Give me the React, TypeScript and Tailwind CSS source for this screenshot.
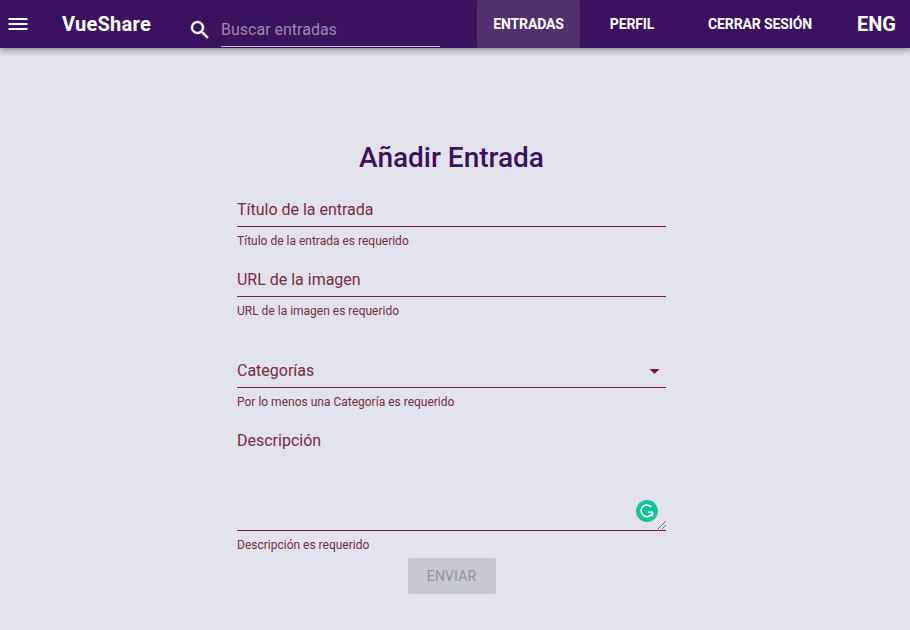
import React from "react";

const errorText = "text-[#7a2c40]";

function Field({ label, message }: { label: string; message: string }) {
  return (
    <div className={`h-[70px] ${errorText}`}>
      <div className="flex h-[34px] items-center border-b border-[#7a1f32] text-base leading-5 tracking-[-0.01px]">{label}</div>
      <div className="mt-2 text-xs leading-3">{message}</div>
    </div>
  );
}

export default function App() {
  return (
    <div className="h-[630px] w-[910px] overflow-hidden bg-[#e2e2ed] font-['Roboto',sans-serif]">
      <header className="relative flex h-12 bg-[#3b125f] text-white shadow-[0_2px_4px_-1px_rgba(0,0,0,0.2),0_4px_5px_rgba(0,0,0,0.14),0_1px_10px_rgba(0,0,0,0.12)]">
        <div className="flex w-[62px] items-center pl-2">
          <svg className="h-3 w-5" viewBox="0 0 20 12" fill="currentColor"><path d="M.5 0h19v2H.5zM.5 5h19v2H.5zM.5 10h19v2H.5z" /></svg>
        </div>
        <div className="flex w-[126px] items-center text-xl font-bold tracking-[0.25px]">VueShare</div>
        <div className="flex w-[289px] items-start">
          <svg className="mt-[18px] size-6" viewBox="0 0 24 24" fill="currentColor" stroke="currentColor" strokeWidth="0.4"><path d="M9.5 3A6.5 6.5 0 0 1 16 9.5c0 1.61-.59 3.09-1.56 4.23l.27.27h.79l5 5-1.5 1.5-5-5v-.79l-.27-.27A6.516 6.516 0 0 1 9.5 16 6.5 6.5 0 0 1 3 9.5 6.5 6.5 0 0 1 9.5 3m0 2C7 5 5 7 5 9.5S7 14 9.5 14 14 12 14 9.5 12 5 9.5 5Z" /></svg>
          <div className="ml-[9px] mt-3 flex h-[35px] w-[219px] items-center border-b border-[#c4b8cf] pt-0.5 text-base text-[#9d88af]">Buscar entradas</div>
        </div>
        <nav className="flex text-sm font-bold tracking-[-0.12px]">
          <div className="flex w-[103px] items-center justify-center rounded-[2px] bg-[#533071]">ENTRADAS</div>
          <div className="flex w-[104px] items-center justify-center">PERFIL</div>
          <div className="flex w-[152px] items-center justify-center">CERRAR SESIÓN</div>
        </nav>
        <div className="ml-[21px] flex items-center text-xl font-bold">ENG</div>
      </header>
      <main className="ml-[237px] w-[429px] pt-[92px]">
        <h1 className="h-[53px] text-center text-[28px] leading-9 font-medium text-[#3b125f]">Añadir Entrada</h1>
        <Field label="Título de la entrada" message="Título de la entrada es requerido" />
        <Field label="URL de la imagen" message="URL de la imagen es requerido" />
        <div className={`mt-[21px] h-[70px] ${errorText}`}>
          <div className="flex h-[34px] items-center justify-between border-b border-[#7a1f32] text-base">
            Categorías
            <svg className="size-6" viewBox="0 0 24 24" fill="#7a1f32"><path d="m7.5 10 5 5 5-5h-10Z" /></svg>
          </div>
          <div className="mt-2 text-xs leading-3">Por lo menos una Categoría es requerido</div>
        </div>
        <div className={`h-[134px] ${errorText}`}>
          <div className="relative h-[107px] border-b border-[#7a1f32] pt-[7px] text-base leading-5">
            Descripción
            <svg className="absolute right-[7px] bottom-[7px] size-6" viewBox="0 0 24 24">
              <circle cx="12" cy="12" r="11" fill="#15c39a" />
              <path d="M16.2 7.9A5.8 5.8 0 1 0 17.2 14.2M13 13.3h4.5v4" fill="none" stroke="white" strokeWidth="1.5" />
            </svg>
            <svg className="absolute right-0 bottom-px h-2 w-2" viewBox="0 0 8 8"><path d="M0 8 8 0M4 8l4-4" stroke="#666" fill="none" /></svg>
          </div>
          <div className="mt-2 text-xs leading-3">Descripción es requerido</div>
        </div>
        <button className="mx-auto flex h-9 w-[88px] items-center justify-center rounded-[2px] bg-[#c7c7d1] text-sm tracking-[0.12px] text-[#9292a0]">ENVIAR</button>
      </main>
    </div>
  );
}
